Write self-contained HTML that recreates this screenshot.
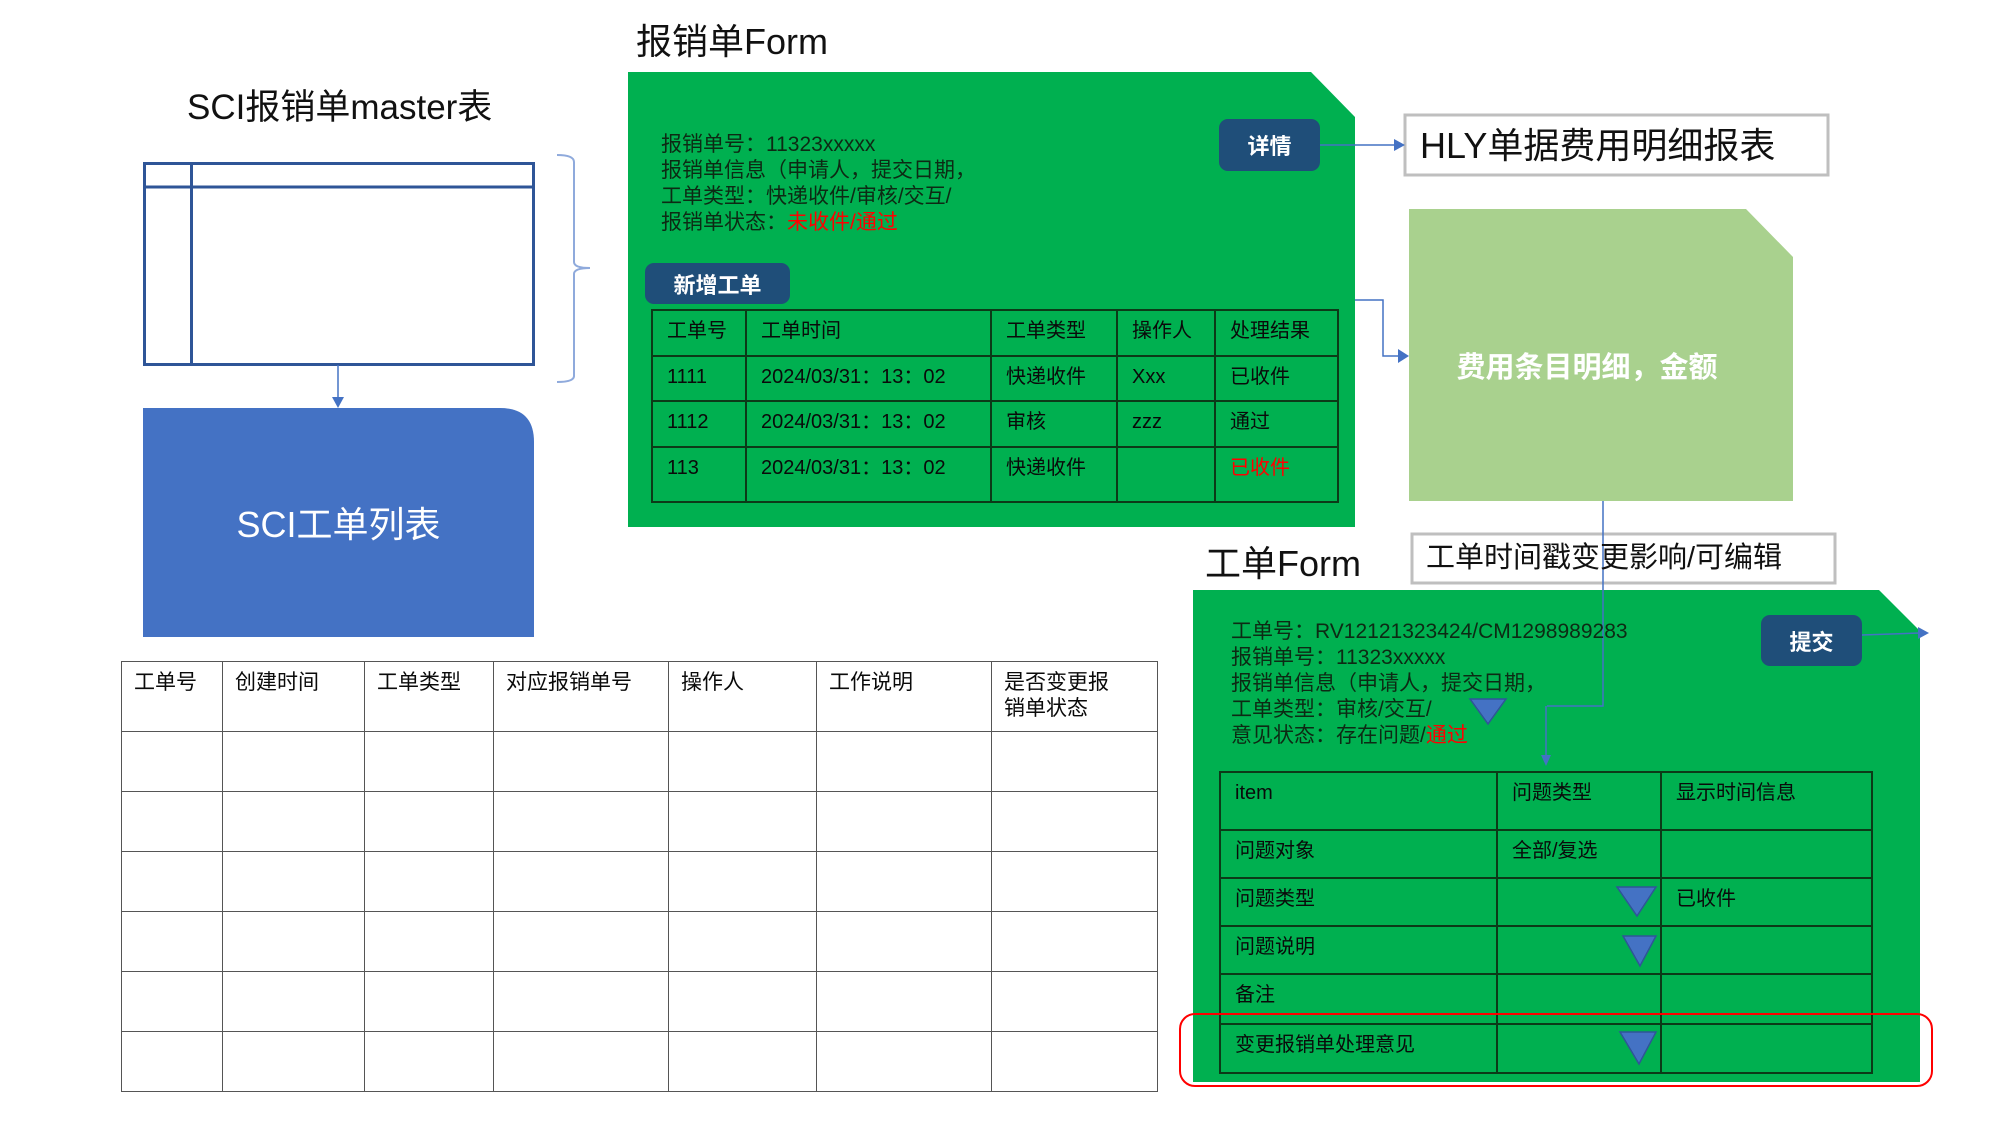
<!DOCTYPE html>
<html><head><meta charset="utf-8"><style>
*{margin:0;padding:0;box-sizing:border-box}
body{width:2000px;height:1125px;background:#fff;position:relative;overflow:hidden;font-family:"Liberation Sans","Noto Sans CJK SC",sans-serif;color:#111}
.a{position:absolute;white-space:nowrap}
.btn{position:absolute;background:#1F4E79;border-radius:9px;color:#fff;font-weight:bold;display:flex;align-items:center;justify-content:center}
table{position:absolute;border-collapse:collapse;table-layout:fixed}
td{border:2px solid #0c3a18;vertical-align:top;font-size:20px;line-height:26px;padding:7px 0 0 14px;color:#0a0a0a}
.bt td{border:1.5px solid #555;font-size:21px;padding:8px 0 0 12px;line-height:26px}
.f{font-size:21px;line-height:26px;color:#0d2a14}
</style></head><body>

<div class="a" style="left:187px;top:86px;font-size:35px;line-height:44px">SCI报销单master表</div>
<div class="a" style="left:636px;top:19px;font-size:36px;line-height:46px">报销单Form</div>
<div class="a" style="left:1205px;top:541px;font-size:36px;line-height:46px">工单Form</div>

<svg class="a" style="left:0;top:0" width="2000" height="1125">
 <rect x="144.5" y="163.5" width="389" height="201" fill="none" stroke="#2F5597" stroke-width="3"/>
 <line x1="144" y1="187" x2="534" y2="187" stroke="#2F5597" stroke-width="3"/>
 <line x1="191.5" y1="163" x2="191.5" y2="365" stroke="#2F5597" stroke-width="3"/>
 <line x1="338" y1="365" x2="338" y2="398" stroke="#4472C4" stroke-width="1.5"/>
 <polygon points="332,397 344,397 338,408" fill="#4472C4"/>
 <path d="M557,155 Q574,155 574,162 L574,262 Q574,268 590,268 Q574,268 574,274 L574,376 Q574,382 557,382" fill="none" stroke="#8FAADC" stroke-width="2"/>
 <path d="M143,408 L500,408 Q534,408 534,442 L534,637 L143,637 Z" fill="#4472C4"/>
 <polygon points="628,72 1311,72 1355,117 1355,527 628,527" fill="#00B050"/>
 <polygon points="1409,209 1746,209 1793,257 1793,501 1409,501" fill="#A9D18E"/>
 <rect x="1405" y="115" width="423" height="60" fill="#fff" stroke="#BFBFBF" stroke-width="3"/>
 <rect x="1412" y="534" width="423" height="49" fill="#fff" stroke="#BFBFBF" stroke-width="3"/>
 <polygon points="1193,590 1879,590 1920,631 1920,1082 1193,1082" fill="#00B050"/>
 <line x1="1320" y1="145" x2="1396" y2="145" stroke="#4472C4" stroke-width="1.5"/>
 <polygon points="1394,139 1405,145 1394,151" fill="#4472C4"/>
 <polyline points="1355,300 1383,300 1383,356 1400,356" fill="none" stroke="#4472C4" stroke-width="1.5"/>
 <polygon points="1398,349 1409,356 1398,363" fill="#4472C4"/>
 <polyline points="1603,501 1603,706 1547,706" fill="none" stroke="#4472C4" stroke-width="1.5"/>
 <line x1="1546" y1="706" x2="1546" y2="758" stroke="#4472C4" stroke-width="1.5"/>
 <polygon points="1541,755 1551,755 1546,766" fill="#4472C4"/>
 <line x1="1862" y1="635" x2="1920" y2="633" stroke="#4472C4" stroke-width="1.5"/>
 <polygon points="1918,627 1929,633 1918,639" fill="#4472C4"/>
 <polygon points="1470,699 1506,699 1488,724" fill="#4472C4" stroke="#2F5597" stroke-width="1.5"/>
</svg>

<div class="a" style="left:143px;top:502px;width:391px;text-align:center;font-size:36px;line-height:46px;color:#fff">SCI工单列表</div>

<div class="a f" style="left:661px;top:132px">报销单号：11323xxxxx<br>报销单信息（申请人，提交日期，<br>工单类型：快递收件/审核/交互/<br>报销单状态：<span style="color:#f00">未收件/通过</span></div>
<div class="btn" style="left:645px;top:263px;width:145px;height:41px;font-size:22px">新增工单</div>
<div class="btn" style="left:1219px;top:119px;width:101px;height:52px;font-size:22px">详情</div>
<div class="a" style="left:1420px;top:122px;font-size:36px;line-height:48px">HLY单据费用明细报表</div>
<div class="a" style="left:1426px;top:538px;font-size:29px;line-height:40px">工单时间戳变更影响/可编辑</div>
<div class="a" style="left:1395px;top:348px;width:384px;text-align:center;font-size:29px;line-height:40px;color:#fff;font-weight:bold">费用条目明细，金额</div>

<table style="left:651px;top:309px;width:686px">
<colgroup><col style="width:94px"><col style="width:245px"><col style="width:126px"><col style="width:98px"><col style="width:123px"></colgroup>
<tr style="height:46px"><td>工单号</td><td>工单时间</td><td>工单类型</td><td>操作人</td><td>处理结果</td></tr>
<tr style="height:45px"><td>1111</td><td>2024/03/31：13：02</td><td>快递收件</td><td>Xxx</td><td>已收件</td></tr>
<tr style="height:46px"><td>1112</td><td>2024/03/31：13：02</td><td>审核</td><td>zzz</td><td>通过</td></tr>
<tr style="height:55px"><td>113</td><td>2024/03/31：13：02</td><td>快递收件</td><td></td><td style="color:#f00">已收件</td></tr>
</table>

<div class="a f" style="left:1231px;top:619px">工单号：RV12121323424/CM1298989283<br>报销单号：11323xxxxx<br>报销单信息（申请人，提交日期，<br>工单类型：审核/交互/<br>意见状态：存在问题/<span style="color:#f00">通过</span></div>
<div class="btn" style="left:1761px;top:615px;width:101px;height:51px;font-size:22px">提交</div>

<table style="left:1219px;top:771px;width:652px">
<colgroup><col style="width:277px"><col style="width:164px"><col style="width:211px"></colgroup>
<tr style="height:58px"><td>item</td><td>问题类型</td><td>显示时间信息</td></tr>
<tr style="height:48px"><td>问题对象</td><td>全部/复选</td><td></td></tr>
<tr style="height:48px"><td>问题类型</td><td></td><td>已收件</td></tr>
<tr style="height:48px"><td>问题说明</td><td></td><td></td></tr>
<tr style="height:50px"><td>备注</td><td></td><td></td></tr>
<tr style="height:49px"><td>变更报销单处理意见</td><td></td><td></td></tr>
</table>
<svg class="a" style="left:0;top:0" width="2000" height="1125">
 <polygon points="1617,887 1656,887 1637,916" fill="#4472C4" stroke="#2F5597" stroke-width="1.5"/>
 <polygon points="1623,936 1656,936 1640,966" fill="#4472C4" stroke="#2F5597" stroke-width="1.5"/>
 <polygon points="1620,1032 1656,1032 1639,1064" fill="#4472C4" stroke="#2F5597" stroke-width="1.5"/>
 <rect x="1180" y="1014" width="752" height="72" rx="15" fill="none" stroke="#f00" stroke-width="2"/>
</svg>

<table class="bt" style="left:121px;top:661px;width:1036px">
<colgroup><col style="width:101px"><col style="width:142px"><col style="width:129px"><col style="width:175px"><col style="width:148px"><col style="width:175px"><col style="width:166px"></colgroup>
<tr style="height:70px"><td>工单号</td><td>创建时间</td><td>工单类型</td><td>对应报销单号</td><td>操作人</td><td>工作说明</td><td>是否变更报<br>销单状态</td></tr>
<tr style="height:60px"><td></td><td></td><td></td><td></td><td></td><td></td><td></td></tr>
<tr style="height:60px"><td></td><td></td><td></td><td></td><td></td><td></td><td></td></tr>
<tr style="height:60px"><td></td><td></td><td></td><td></td><td></td><td></td><td></td></tr>
<tr style="height:60px"><td></td><td></td><td></td><td></td><td></td><td></td><td></td></tr>
<tr style="height:60px"><td></td><td></td><td></td><td></td><td></td><td></td><td></td></tr>
<tr style="height:60px"><td></td><td></td><td></td><td></td><td></td><td></td><td></td></tr>
</table>
</body></html>
